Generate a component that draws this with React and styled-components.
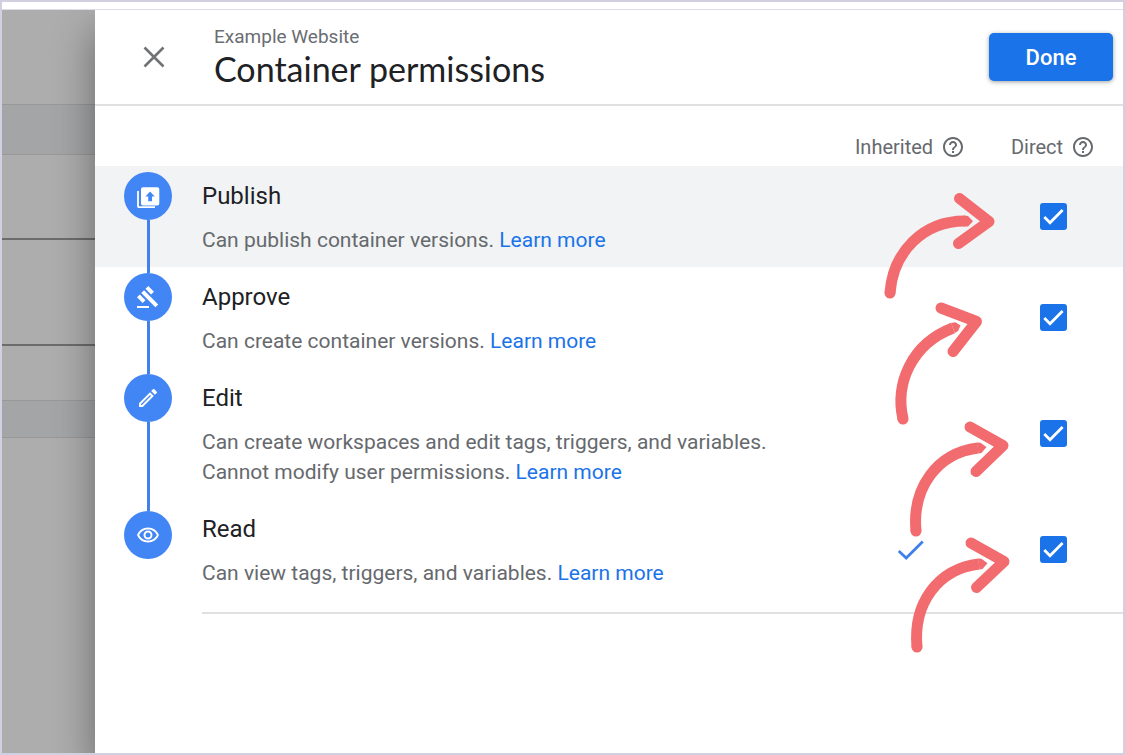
import React, { useState } from "react";
import { createGlobalStyle, styled } from "styled-components";
import { MdGavel, MdHelpOutline, MdOutlineEdit, MdOutlineRemoveRedEye } from "react-icons/md";

const GlobalStyle = createGlobalStyle`
  *, *::before, *::after {
    box-sizing: border-box;
  }

  body {
    margin: 0;
    background: #fff;
    font-family: Roboto, "Liberation Sans", sans-serif;
  }
`;

const Page = styled("div")`
  min-height: 100vh;
  display: flex;
  flex-direction: column;
  border: 2px solid #d0d0e1;
`;

const TopStrip = styled("div")`
  height: 8px;
  border-bottom: 1px solid #dcdcea;
`;

const Main = styled("div")`
  flex: 1;
  display: flex;
  overflow: hidden;
`;

const Backdrop = styled("div")`
  flex: 0 0 93px;
  display: flex;
  flex-direction: column;
  background: #adadad;
`;

const BackdropBand = styled("div")`
  height: ${({ $height }) => $height}px;
  background: ${({ $tinted }) => ($tinted ? "#a3a5a6" : "#adadad")};
  border-bottom: ${({ $dark }) => ($dark ? "2px solid #6c6c6c" : "1px solid #989898")};
`;

const Panel = styled("main")`
  position: relative;
  flex: 1;
  min-width: 0;
  background: #fff;
  box-shadow: 0 20px 38px rgba(0, 0, 0, 0.4);
`;

const Header = styled("header")`
  display: flex;
  align-items: center;
  gap: 36px;
  height: 96px;
  padding: 0 10px 0 35px;
  border-bottom: 2px solid #dfe0e2;
`;

const CloseButton = styled("button")`
  width: 48px;
  height: 48px;
  display: flex;
  align-items: center;
  justify-content: center;
  padding: 0;
  border: none;
  background: none;
  cursor: pointer;
`;

const Heading = styled("div")`
  flex: 1;
`;

const Subtitle = styled("p")`
  margin: 0;
  font-size: 19px;
  line-height: 24px;
  color: #6a6d71;
`;

const Title = styled("h1")`
  margin: 0;
  font-family: Lato, Roboto, sans-serif;
  font-size: 34px;
  font-weight: 400;
  line-height: 40px;
  color: #202124;
`;

const DoneButton = styled("button")`
  width: 124px;
  height: 48px;
  border: none;
  border-radius: 5px;
  background: #1a73e8;
  box-shadow: 0 1px 4px rgba(60, 64, 67, 0.5);
  color: #fff;
  font-family: Roboto, sans-serif;
  font-size: 22px;
  font-weight: 500;
  cursor: pointer;
`;

const Body = styled("div")`
  position: relative;
`;

const Table = styled("table")`
  display: block;
`;

const TableSection = styled("tbody")`
  display: block;
`;

const Row = styled("tr")`
  display: grid;
  grid-template-columns: 107px 1fr 146px 140px;
  background: ${({ $active }) => ($active ? "#f1f3f4" : "transparent")};
`;

const HeadRow = styled(Row)`
  height: 60px;
  align-items: end;
  padding-bottom: 4px;
`;

const ColumnTitle = styled("th")`
  display: flex;
  align-items: center;
  justify-content: center;
  gap: 8px;
  padding: 0;
  font-size: 20px;
  font-weight: 400;
  line-height: 30px;
  color: #66696d;
`;

const RailCell = styled("td")`
  display: flex;
  flex-direction: column;
  align-items: center;
  width: 48px;
  margin-left: 29px;
  padding: 0;
`;

const RailLine = styled("span")`
  width: 3px;
  flex: ${({ $height }) => ($height ? `0 0 ${$height}px` : "1")};
  background: ${({ $hidden }) => ($hidden ? "transparent" : "#4280ec")};
`;

const StepCircle = styled("span")`
  width: 48px;
  height: 48px;
  flex: none;
  display: flex;
  align-items: center;
  justify-content: center;
  border-radius: 50%;
  background: #4285f4;
  color: #fff;
`;

const InfoCell = styled("td")`
  padding: 15px 0 12px;
`;

const Name = styled("h2")`
  margin: 0 0 14px;
  font-size: 24px;
  font-weight: 400;
  line-height: 30px;
  color: #202124;
`;

const Description = styled("p")`
  margin: 0;
  font-size: 21px;
  line-height: 30px;
  color: #66696d;
`;

const Link = styled("a")`
  color: #1a73e8;
  text-decoration: none;
`;

const MarkCell = styled("td")`
  display: flex;
  align-items: center;
  justify-content: center;
  padding: 0;
`;

const CheckboxLabel = styled("label")`
  display: grid;
  cursor: pointer;

  > * {
    grid-area: 1 / 1;
  }

  svg {
    pointer-events: none;
  }
`;

const Checkbox = styled("input")`
  appearance: none;
  width: 27px;
  height: 27px;
  margin: 0;
  border: 2px solid #66696d;
  border-radius: 3px;
  cursor: pointer;

  &:checked {
    border-color: #1a73e8;
    background: #1a73e8;
  }
`;

const Divider = styled("hr")`
  margin: 12px 0 0 107px;
  border: none;
  border-top: 2px solid #dfe0e2;
`;

const Arrows = styled("svg")`
  position: absolute;
  top: 74px;
  right: 103px;
  pointer-events: none;
`;

const PublishIcon = () => (
  <svg width="24" height="24" viewBox="0 0 24 24" fill="none">
    <path
      fill="#fff"
      fillRule="evenodd"
      d="M7 3.3h14.3a2 2 0 0 1 2 2v14.3a2 2 0 0 1-2 2H7a2 2 0 0 1-2-2V5.3a2 2 0 0 1 2-2zM14.1 7.5l-4.6 5.1h2.7v4.6h3.8v-4.6h2.7z"
    />
    <path d="M2 7v15.6a.5.5 0 0 0 .5.5H19" stroke="#fff" strokeWidth="1.8" />
  </svg>
);

const arrows = [
  {
    start: [890, 293],
    curve: "C893 252 923 221 965 221",
    tip: "M964 215.5L968 216L973 221.3L968 226.4L964 226.6z",
    head: "M959.5 198.5L989 221.5L958.5 243.5",
  },
  {
    start: [903, 419],
    curve: "C895 384 911 344 953 328",
    tip: "M951 323L955.5 322.3L960.5 325.5L958 331L955 333z",
    head: "M941 308L976.5 321.5L953 351.5",
  },
  {
    start: [916, 531],
    curve: "C912 488 937 453 978 448",
    tip: "M977 442.6L980.5 442.8L986.5 447L981.5 453L978.5 453.5z",
    head: "M970 427L1003 445.5L976 471.5",
  },
  {
    start: [917, 647],
    curve: "C913 603 938 569 979 564",
    tip: "M978 558.6L981.5 558.8L987.5 563.3L982.5 569L979.5 569.5z",
    head: "M971 543L1004 561.5L976.5 587.5",
  },
];

const permissions = [
  {
    name: "Publish",
    icon: <PublishIcon />,
    lines: ["Can publish container versions."],
    active: true,
  },
  {
    name: "Approve",
    icon: <MdGavel size={24} />,
    lines: ["Can create container versions."],
  },
  {
    name: "Edit",
    icon: <MdOutlineEdit size={24} />,
    lines: [
      "Can create workspaces and edit tags, triggers, and variables.",
      "Cannot modify user permissions.",
    ],
  },
  {
    name: "Read",
    icon: <MdOutlineRemoveRedEye size={24} />,
    lines: ["Can view tags, triggers, and variables."],
    inherited: true,
  },
];

function PermissionRow({ permission, first, last }) {
  const [checked, setChecked] = useState(true);
  const { name, icon, lines, active, inherited } = permission;

  return (
    <Row $active={active}>
      <RailCell>
        <RailLine $height={last ? 12 : 6} $hidden={first} />
        <StepCircle>{icon}</StepCircle>
        <RailLine $hidden={last} />
      </RailCell>
      <InfoCell>
        <Name>{name}</Name>
        <Description>
          {lines.map((line, i) => (
            <React.Fragment key={line}>
              {i > 0 && <br />}
              {line}
            </React.Fragment>
          ))}{" "}
          <Link href="#learn-more">Learn more</Link>
        </Description>
      </InfoCell>
      <MarkCell>
        {inherited && (
          <svg width="27" height="27" viewBox="0 0 27 27" fill="none">
            <path d="M1.8 15L9.2 22L25.8 5.6" stroke="#3f80ec" strokeWidth="2.8" />
          </svg>
        )}
      </MarkCell>
      <MarkCell>
        <CheckboxLabel>
          <Checkbox
            type="checkbox"
            aria-label={name}
            checked={checked}
            onChange={(e) => setChecked(e.target.checked)}
          />
          {checked && (
            <svg width="27" height="27" viewBox="0 0 27 27" fill="none">
              <path d="M4.3 14L10 19.7L22.6 7" stroke="#fff" strokeWidth="2.8" />
            </svg>
          )}
        </CheckboxLabel>
      </MarkCell>
    </Row>
  );
}

export default function App() {
  return (
    <Page>
      <GlobalStyle />
      <TopStrip />
      <Main>
        <Backdrop>
          <BackdropBand $height={95} />
          <BackdropBand $height={50} $tinted />
          <BackdropBand $height={85} $dark />
          <BackdropBand $height={106} $dark />
          <BackdropBand $height={55} />
          <BackdropBand $height={37} $tinted />
        </Backdrop>
        <Panel>
          <Header>
            <CloseButton aria-label="Close">
              <svg width="22" height="22" viewBox="0 0 22 22" fill="none">
                <path d="M1.5 1.5L20.5 20.5M20.5 1.5L1.5 20.5" stroke="#707276" strokeWidth="2.6" />
              </svg>
            </CloseButton>
            <Heading>
              <Subtitle>Example Website</Subtitle>
              <Title>Container permissions</Title>
            </Heading>
            <DoneButton>Done</DoneButton>
          </Header>
          <Body>
            <Table>
              <TableSection as="thead">
                <HeadRow>
                  <td />
                  <td />
                  <ColumnTitle>
                    Inherited <MdHelpOutline size={24} />
                  </ColumnTitle>
                  <ColumnTitle>
                    Direct <MdHelpOutline size={24} />
                  </ColumnTitle>
                </HeadRow>
              </TableSection>
              <TableSection>
                {permissions.map((permission, i) => (
                  <PermissionRow
                    key={permission.name}
                    permission={permission}
                    first={i === 0}
                    last={i === permissions.length - 1}
                  />
                ))}
              </TableSection>
            </Table>
            <Divider />
            <Arrows width="140" height="480" viewBox="880 180 140 480" fill="none">
              {arrows.map(({ start: [x, y], curve, tip, head }) => (
                <g key={y} stroke="#f26b6e" strokeWidth="11" strokeLinejoin="round">
                  {/* round cap at the start only, the far end is a point */}
                  <circle cx={x} cy={y} r="5.5" fill="#f26b6e" stroke="none" />
                  <path d={`M${x} ${y}${curve}`} />
                  <path d={tip} fill="#f26b6e" stroke="none" />
                  <path d={head} strokeLinecap="round" />
                </g>
              ))}
            </Arrows>
          </Body>
        </Panel>
      </Main>
    </Page>
  );
}
